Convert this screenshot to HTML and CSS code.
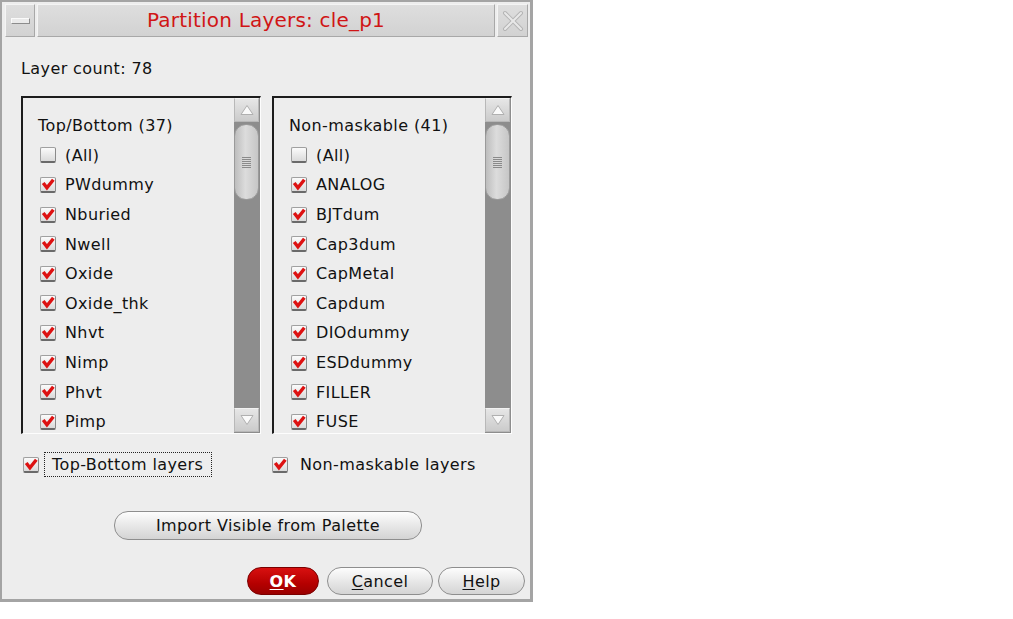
FILE: index.html
```html
<!DOCTYPE html>
<html>
<head>
<meta charset="utf-8">
<link rel="stylesheet" href="styles.css">
</head>
<body>
<div class="dialog">
  <div class="titlebar">
    <div class="tb-btn tb-min"><span class="min-bar"></span></div>
    <div class="tb-title">Partition Layers: cle_p1</div>
    <div class="tb-btn tb-close">
      <svg width="22" height="22" viewBox="0 0 22 22">
        <path d="M3 3 L19 19 M19 3 L3 19" stroke="#b4b4b4" stroke-width="4" stroke-linecap="round" fill="none"/>
        <path d="M3 3 L19 19 M19 3 L3 19" stroke="#e8e8e8" stroke-width="2" stroke-linecap="round" fill="none"/>
      </svg>
    </div>
  </div>
  <div class="content">
    <div class="count">Layer count: 78</div>
    <div class="lists">
      <div class="listbox">
        <div class="items">
          <div class="row header">Top/Bottom (37)</div>
          <div class="row"><span class="cb"></span>(All)</div>
          <div class="row"><span class="cb on"><svg viewBox="0 0 15 15"><path d="M3 6.5 L6.5 11 L12.5 3.5" /></svg></span>PWdummy</div>
          <div class="row"><span class="cb on"><svg viewBox="0 0 15 15"><path d="M3 6.5 L6.5 11 L12.5 3.5" /></svg></span>Nburied</div>
          <div class="row"><span class="cb on"><svg viewBox="0 0 15 15"><path d="M3 6.5 L6.5 11 L12.5 3.5" /></svg></span>Nwell</div>
          <div class="row"><span class="cb on"><svg viewBox="0 0 15 15"><path d="M3 6.5 L6.5 11 L12.5 3.5" /></svg></span>Oxide</div>
          <div class="row"><span class="cb on"><svg viewBox="0 0 15 15"><path d="M3 6.5 L6.5 11 L12.5 3.5" /></svg></span>Oxide_thk</div>
          <div class="row"><span class="cb on"><svg viewBox="0 0 15 15"><path d="M3 6.5 L6.5 11 L12.5 3.5" /></svg></span>Nhvt</div>
          <div class="row"><span class="cb on"><svg viewBox="0 0 15 15"><path d="M3 6.5 L6.5 11 L12.5 3.5" /></svg></span>Nimp</div>
          <div class="row"><span class="cb on"><svg viewBox="0 0 15 15"><path d="M3 6.5 L6.5 11 L12.5 3.5" /></svg></span>Phvt</div>
          <div class="row"><span class="cb on"><svg viewBox="0 0 15 15"><path d="M3 6.5 L6.5 11 L12.5 3.5" /></svg></span>Pimp</div>
        </div>
        <div class="scrollbar">
          <div class="sb-btn"><svg width="16" height="12" viewBox="0 0 16 12"><path d="M8 1.5 L14 10.5 L2 10.5 Z" fill="#fafafa" stroke="#b0b0b0" stroke-width="1"/></svg></div>
          <div class="sb-track">
            <div class="thumb"><span class="grip"></span></div>
          </div>
          <div class="sb-btn"><svg width="16" height="12" viewBox="0 0 16 12"><path d="M2 1.5 L14 1.5 L8 10.5 Z" fill="#fafafa" stroke="#b0b0b0" stroke-width="1"/></svg></div>
        </div>
      </div>
      <div class="listbox">
        <div class="items">
          <div class="row header">Non-maskable (41)</div>
          <div class="row"><span class="cb"></span>(All)</div>
          <div class="row"><span class="cb on"><svg viewBox="0 0 15 15"><path d="M3 6.5 L6.5 11 L12.5 3.5" /></svg></span>ANALOG</div>
          <div class="row"><span class="cb on"><svg viewBox="0 0 15 15"><path d="M3 6.5 L6.5 11 L12.5 3.5" /></svg></span>BJTdum</div>
          <div class="row"><span class="cb on"><svg viewBox="0 0 15 15"><path d="M3 6.5 L6.5 11 L12.5 3.5" /></svg></span>Cap3dum</div>
          <div class="row"><span class="cb on"><svg viewBox="0 0 15 15"><path d="M3 6.5 L6.5 11 L12.5 3.5" /></svg></span>CapMetal</div>
          <div class="row"><span class="cb on"><svg viewBox="0 0 15 15"><path d="M3 6.5 L6.5 11 L12.5 3.5" /></svg></span>Capdum</div>
          <div class="row"><span class="cb on"><svg viewBox="0 0 15 15"><path d="M3 6.5 L6.5 11 L12.5 3.5" /></svg></span>DIOdummy</div>
          <div class="row"><span class="cb on"><svg viewBox="0 0 15 15"><path d="M3 6.5 L6.5 11 L12.5 3.5" /></svg></span>ESDdummy</div>
          <div class="row"><span class="cb on"><svg viewBox="0 0 15 15"><path d="M3 6.5 L6.5 11 L12.5 3.5" /></svg></span>FILLER</div>
          <div class="row"><span class="cb on"><svg viewBox="0 0 15 15"><path d="M3 6.5 L6.5 11 L12.5 3.5" /></svg></span>FUSE</div>
        </div>
        <div class="scrollbar">
          <div class="sb-btn"><svg width="16" height="12" viewBox="0 0 16 12"><path d="M8 1.5 L14 10.5 L2 10.5 Z" fill="#fafafa" stroke="#b0b0b0" stroke-width="1"/></svg></div>
          <div class="sb-track">
            <div class="thumb"><span class="grip"></span></div>
          </div>
          <div class="sb-btn"><svg width="16" height="12" viewBox="0 0 16 12"><path d="M2 1.5 L14 1.5 L8 10.5 Z" fill="#fafafa" stroke="#b0b0b0" stroke-width="1"/></svg></div>
        </div>
      </div>
    </div>
    <div class="toggles">
      <div class="toggle left">
        <span class="cb on"><svg viewBox="0 0 15 15"><path d="M3 6.5 L6.5 11 L12.5 3.5" /></svg></span>
        <span class="focus">Top-Bottom layers</span>
      </div>
      <div class="toggle right">
        <span class="cb on"><svg viewBox="0 0 15 15"><path d="M3 6.5 L6.5 11 L12.5 3.5" /></svg></span>
        <span class="tlabel">Non-maskable layers</span>
      </div>
    </div>
    <div class="import-row">
      <button class="btn import">Import Visible from Palette</button>
    </div>
    <div class="actions">
      <button class="btn ok"><u>O</u>K</button>
      <button class="btn cancel"><u>C</u>ancel</button>
      <button class="btn help"><u>H</u>elp</button>
    </div>
  </div>
</div>
</body>
</html>
```

FILE: styles.css
```css
html, body {
  margin: 0;
  padding: 0;
  background: #ffffff;
}
body {
  font-family: "DejaVu Sans", "Liberation Sans", sans-serif;
  font-size: 16px;
  letter-spacing: 0.4px;
  color: #111;
}
.dialog {
  width: 528px;
  height: 597px;
  border: 3px solid #a4a4a4;
  border-top-width: 2px;
  border-left-width: 2px;
  background: #ededed;
  display: flex;
  flex-direction: column;
}
.titlebar {
  display: flex;
  padding: 2px 2px 0 3px;
  gap: 2px;
  box-sizing: border-box;
  height: 35px;
}
.tb-btn, .tb-title {
  background: linear-gradient(#dedede, #d2d2d2);
  border-top: 1px solid #f4f4f4;
  border-left: 1px solid #f4f4f4;
  border-right: 1px solid #a8a8a8;
  border-bottom: 1px solid #a8a8a8;
  box-sizing: border-box;
  display: flex;
  align-items: center;
  justify-content: center;
}
.tb-min { width: 30px; }
.tb-close { width: 31px; }
.tb-title {
  flex: 1;
  color: #d01515;
  font-size: 20px;
  letter-spacing: 0.2px;
  padding-bottom: 1px;
}
.min-bar {
  display: block;
  width: 17px;
  height: 4px;
  background: #eaeaea;
  border-top: 1px solid #fafafa;
  border-left: 1px solid #fafafa;
  border-bottom: 1px solid #8c8c8c;
  border-right: 1px solid #8c8c8c;
}
.content {
  flex: 1;
  padding: 0 5px 0 19px;
  display: flex;
  flex-direction: column;
}
.count {
  height: 17px;
  margin-top: 23px;
  line-height: 17px;
}
.lists {
  display: flex;
  gap: 11px;
  margin-top: 19px;
}
.listbox {
  width: 240px;
  height: 338px;
  box-sizing: border-box;
  border-top: 2px solid #1c1c1c;
  border-left: 2px solid #1c1c1c;
  border-right: 1px solid #fdfdfd;
  border-bottom: 1px solid #fdfdfd;
  display: flex;
}
.items {
  flex: 1;
  padding-top: 13px;
  padding-left: 15px;
  overflow: hidden;
}
.row {
  height: 29.6px;
  display: flex;
  align-items: center;
  padding-left: 2px;
  white-space: nowrap;
}
.row.header { padding-left: 0; }
.cb {
  width: 16px;
  height: 16px;
  box-sizing: border-box;
  background: linear-gradient(#fbfbfb, #dadada);
  border: 1px solid #a0a0a0;
  border-bottom: 2px solid #6a6a6a;
  border-right-color: #8a8a8a;
  border-radius: 2px;
  margin-right: 9px;
  flex: none;
  position: relative;
  display: inline-block;
}
.cb svg {
  position: absolute;
  left: -1px;
  top: -2px;
  width: 16px;
  height: 16px;
  overflow: visible;
}
.cb svg path {
  fill: none;
  stroke: #dd1111;
  stroke-width: 3.2;
  stroke-linejoin: miter;
  stroke-linecap: butt;
}
.scrollbar {
  width: 26px;
  display: flex;
  flex-direction: column;
  background: #8d8d8d;
  padding: 0 1px 1px 0;
  box-sizing: border-box;
}
.sb-btn {
  height: 24px;
  flex: none;
  background: linear-gradient(#e6e6e6, #cbcbcb);
  border: 1px solid #b8b8b8;
  border-top-color: #f2f2f2;
  box-sizing: border-box;
  display: flex;
  align-items: center;
  justify-content: center;
}
.sb-track {
  flex: 1;
  padding: 2px 0;
  background: #8d8d8d;
}
.thumb {
  height: 76px;
  border-radius: 12px;
  background: linear-gradient(90deg, #bdbdbd, #dcdcdc 45%, #c6c6c6);
  border: 1px solid #9a9a9a;
  box-sizing: border-box;
  display: flex;
  align-items: center;
  justify-content: center;
}
.grip {
  display: block;
  width: 9px;
  height: 11px;
  background: repeating-linear-gradient(#8a8a8a 0 1px, transparent 1px 2px);
}
.toggles {
  display: flex;
  margin-top: 18px;
  height: 25px;
  align-items: center;
}
.toggle {
  display: flex;
  align-items: center;
  white-space: nowrap;
}
.toggle.left {
  width: 251px;
  padding-left: 2px;
  box-sizing: border-box;
}
.toggle.left .cb { margin-right: 5px; }
.focus {
  border: 1px dotted #222;
  padding: 2px 0 2px 7px;
  height: 25px;
  box-sizing: border-box;
  width: 168px;
  flex: none;
  display: flex;
  align-items: center;
  white-space: nowrap;
}
.toggle.right .cb { margin-right: 12px; }
.import-row {
  display: flex;
  justify-content: center;
  margin-top: 34px;
}
.btn {
  font-family: "DejaVu Sans", "Liberation Sans", sans-serif;
  font-size: 16px;
  letter-spacing: 0.4px;
  color: #111;
  background: linear-gradient(#fdfdfd, #e4e4e4 60%, #d4d4d4);
  border: 1px solid #8e8e8e;
  border-radius: 14px;
  box-sizing: border-box;
  padding: 0;
  cursor: default;
  white-space: nowrap;
}
.import {
  width: 308px;
  height: 29px;
  margin-left: -10px;
}
.actions {
  display: flex;
  justify-content: flex-end;
  margin-top: 27px;
  gap: 6px;
}
.actions .btn { height: 28px; }
.ok {
  width: 72px;
  margin-right: 2px;
  background: linear-gradient(#d81010, #b50000 60%, #9a0000);
  border-color: #7a0000;
  color: #fff;
  font-weight: bold;
}
.cancel { width: 106px; }
.help { width: 87px; margin-left: -1px; }
u { text-underline-offset: 2px; }
```
